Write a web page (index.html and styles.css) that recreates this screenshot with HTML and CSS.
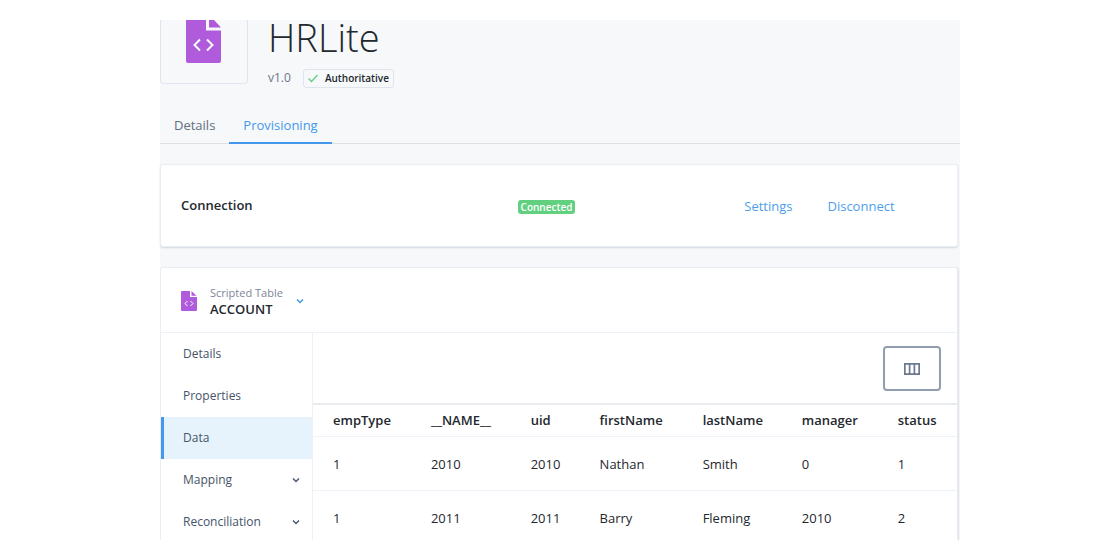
FILE: index.html
```html
<!DOCTYPE html>
<html lang="en">
<head>
<meta charset="utf-8">
<meta name="viewport" content="width=device-width, initial-scale=1">
<title>HRLite</title>
<link rel="stylesheet" href="styles.css">
</head>
<body>
<main class="panel">
  <header class="app-header">
    <div class="app-logo">
      <svg class="logo-large" viewBox="0 0 36 44" aria-hidden="true">
        <path fill="#b05bdb" d="M0 0H20V10.500H35V41a2 2 0 0 1-2 2H2a2 2 0 0 1-2-2ZM23 0H28L35 7.500H23Z"/>
        <path fill="none" stroke="#fff" stroke-width="2" d="M14 19.500L8.500 25l5.500 5.500M21 19.500l5.500 5.500-5.500 5.500"/>
      </svg>
    </div>
    <div class="app-info">
      <h1 class="app-title">HRLite</h1>
      <div class="app-meta">
        <span class="version">v1.0</span>
        <span class="tag">
          <svg class="check" viewBox="0 0 10 10" aria-hidden="true"><path fill="none" stroke="#63d184" stroke-width="1.300" d="M.5 5.500L3.500 8.500 9.500 2"/></svg>
          Authoritative
        </span>
      </div>
    </div>
  </header>

  <nav class="tabs">
    <a class="tab" href="#details">Details</a>
    <a class="tab tab-active" href="#provisioning" aria-current="page">Provisioning</a>
  </nav>

  <section class="card connection">
    <h2 class="connection-title">Connection</h2>
    <div class="connection-status"><span class="badge">Connected</span></div>
    <div class="connection-actions">
      <a class="link" href="#settings">Settings</a>
      <a class="link" href="#disconnect">Disconnect</a>
    </div>
  </section>

  <section class="card object">
    <button class="object-picker" type="button">
      <svg class="logo-small" viewBox="0 0 16 20" aria-hidden="true">
        <path fill="#b05bdb" d="M1 0H9V6H16V19a1 1 0 0 1-1 1H1a1 1 0 0 1-1-1V1a1 1 0 0 1 1-1ZM10.500 0L15.500 4.700H10.500Z"/>
        <path fill="none" stroke="#fff" stroke-width="1" d="M6.500 10L4 12.500 6.500 15M9.500 10l2.500 2.500L9.500 15"/>
      </svg>
      <span class="object-names">
        <span class="object-kind">Scripted Table</span>
        <span class="object-name">ACCOUNT</span>
      </span>
      <svg class="chevron chevron-blue" viewBox="0 0 8 8" aria-hidden="true"><path d="M1 2.500l3 3 3-3"/></svg>
    </button>

    <div class="object-body">
      <nav class="side-nav">
        <a class="side-item" href="#object-details">Details</a>
        <a class="side-item" href="#properties">Properties</a>
        <a class="side-item side-item-active" href="#data" aria-current="page">Data</a>
        <button class="side-item side-group" type="button">Mapping
          <svg class="chevron" viewBox="0 0 8 8" aria-hidden="true"><path d="M1 2.500l3 3 3-3"/></svg>
        </button>
        <button class="side-item side-group" type="button">Reconciliation
          <svg class="chevron" viewBox="0 0 8 8" aria-hidden="true"><path d="M1 2.500l3 3 3-3"/></svg>
        </button>
      </nav>

      <div class="data">
        <div class="toolbar">
          <button class="columns-button" type="button" aria-label="Choose columns">
            <svg class="columns-icon" viewBox="0 0 16 12" aria-hidden="true"><path fill="none" stroke="#6b788f" stroke-width="1.700" d="M.85.85h14.300v10.300H.85ZM5.600.85v10.300M10.400.85v10.300"/></svg>
          </button>
        </div>
        <table class="grid">
          <thead>
            <tr>
              <th class="col-type" scope="col">empType</th>
              <th class="col-name" scope="col">__NAME__</th>
              <th class="col-uid" scope="col">uid</th>
              <th class="col-first" scope="col">firstName</th>
              <th class="col-last" scope="col">lastName</th>
              <th class="col-manager" scope="col">manager</th>
              <th class="col-status" scope="col">status</th>
            </tr>
          </thead>
          <tbody>
            <tr><td>1</td><td>2010</td><td>2010</td><td>Nathan</td><td>Smith</td><td>0</td><td>1</td></tr>
            <tr><td>1</td><td>2011</td><td>2011</td><td>Barry</td><td>Fleming</td><td>2010</td><td>2</td></tr>
          </tbody>
        </table>
      </div>
    </div>
  </section>
</main>
</body>
</html>
```

FILE: styles.css
```css
* { box-sizing: border-box; }

body {
  margin: 0;
  padding: 20px;
  background: #fff;
  color: #23282e;
  font: 13px/20px "Open Sans", "Noto Sans", sans-serif;
}

h1, h2 { margin: 0; }
a { text-decoration: none; }
button { font: inherit; cursor: pointer; }

.panel {
  display: flex;
  flex-direction: column;
  max-width: 800px;
  height: calc(100vh - 40px);
  margin: 0 auto;
  background: #f6f8fa;
}

.app-header {
  display: flex;
  align-items: flex-start;
  gap: 20px;
}

.app-logo {
  display: flex;
  justify-content: center;
  width: 88px;
  height: 64px;
  border: 1px solid #dfe4f0;
  border-top: 0;
  border-radius: 0 0 4px 4px;
}

.logo-large { width: 36px; height: 44px; }

.app-title {
  font-size: 38px;
  font-weight: 300;
  line-height: 34px;
}

.app-meta {
  display: flex;
  align-items: center;
  gap: 12px;
  margin-top: 14px;
}

.version { font-size: 12px; color: #6b7688; }

.tag {
  display: flex;
  align-items: center;
  gap: 7px;
  padding: 0 4px;
  border: 1px solid #dfe4ee;
  border-radius: 3px;
  font-size: 10px;
  font-weight: 600;
  line-height: 17px;
}

.check { width: 10px; height: 10px; }

.tabs {
  display: flex;
  margin-top: 18px;
  border-bottom: 1px solid #dde1e7;
}

.tab {
  padding: 8px 14px 6px;
  margin-bottom: -1px;
  border-bottom: 2px solid transparent;
  color: #626e80;
  line-height: 22px;
}

.tab-active { border-color: #4498ec; color: #4498ec; }

.card {
  margin: 20px 2px 0 0;
  background: #fff;
  border: 1px solid #e9eef4;
  border-radius: 3px;
  box-shadow: 0 1px 2px rgba(30, 45, 70, 0.15);
}

.connection {
  display: grid;
  grid-template-columns: 337fr 227fr 213fr;
  align-items: center;
  padding: 30px 0 30px 20px;
}

.connection-title {
  font-size: 13px;
  font-weight: 600;
  line-height: 21px;
}

.badge {
  display: inline-block;
  padding: 0 3px;
  border-radius: 3px;
  background: #61d07f;
  color: #fff;
  font-size: 10px;
  font-weight: 600;
  line-height: 14px;
}

.connection-actions { display: flex; gap: 35px; }
.link { color: #4c9eed; }

.object {
  flex: 1;
  min-height: 0;
  overflow: hidden;
  border-bottom: 0;
  border-radius: 3px 3px 0 0;
  box-shadow: 1px 0 1px rgba(30, 45, 70, 0.1);
}

.object-picker {
  display: flex;
  align-items: center;
  gap: 13px;
  width: 100%;
  padding: 17px 20px 15px;
  border: 0;
  border-bottom: 1px solid #edf1f7;
  background: none;
  color: #23282e;
  text-align: left;
}

.logo-small { width: 16px; height: 20px; }
.object-names { display: flex; flex-direction: column; line-height: 16px; }
.object-kind { font-size: 11px; color: #7b8698; }
.object-name { font-weight: 600; }

.chevron {
  width: 8px;
  height: 8px;
  fill: none;
  stroke: #4a586f;
  stroke-width: 1.500;
}

.chevron-blue { stroke: #4498ec; }

.object-body { display: flex; }

.side-nav {
  display: flex;
  flex: 0 0 152px;
  flex-direction: column;
  border-right: 1px solid #edf1f7;
}

.side-item {
  padding: 11px 12px 11px 19px;
  border: 0;
  border-left: 3px solid transparent;
  background: none;
  color: #465368;
  font-size: 12px;
  text-align: left;
}

.side-item-active { border-color: #4498ec; background: #e6f3fd; }

.side-group {
  display: flex;
  align-items: center;
  justify-content: space-between;
}

.data { flex: 1; min-width: 0; }

.toolbar {
  display: flex;
  justify-content: flex-end;
  padding: 13px 16px 12px;
}

.columns-button {
  display: flex;
  align-items: center;
  justify-content: center;
  width: 58px;
  height: 45px;
  border: 2px solid #919db0;
  border-radius: 4px;
  background: #fff;
}

.columns-icon { width: 16px; height: 12px; }

.grid {
  width: 100%;
  table-layout: fixed;
  border-collapse: collapse;
  border-top: 2px solid #e9ebee;
}

.grid th, .grid td {
  padding: 17px 0 16px 20px;
  border-bottom: 1px solid #edf3f9;
  text-align: left;
}

.grid th { padding: 5px 0 6px 20px; font-weight: 600; }

.col-type { width: 15.2%; }
.col-name { width: 15.5%; }
.col-uid { width: 10.7%; }
.col-first { width: 16%; }
.col-last { width: 15.4%; }
.col-manager { width: 14.9%; }
.col-status { width: 12.3%; }
```
